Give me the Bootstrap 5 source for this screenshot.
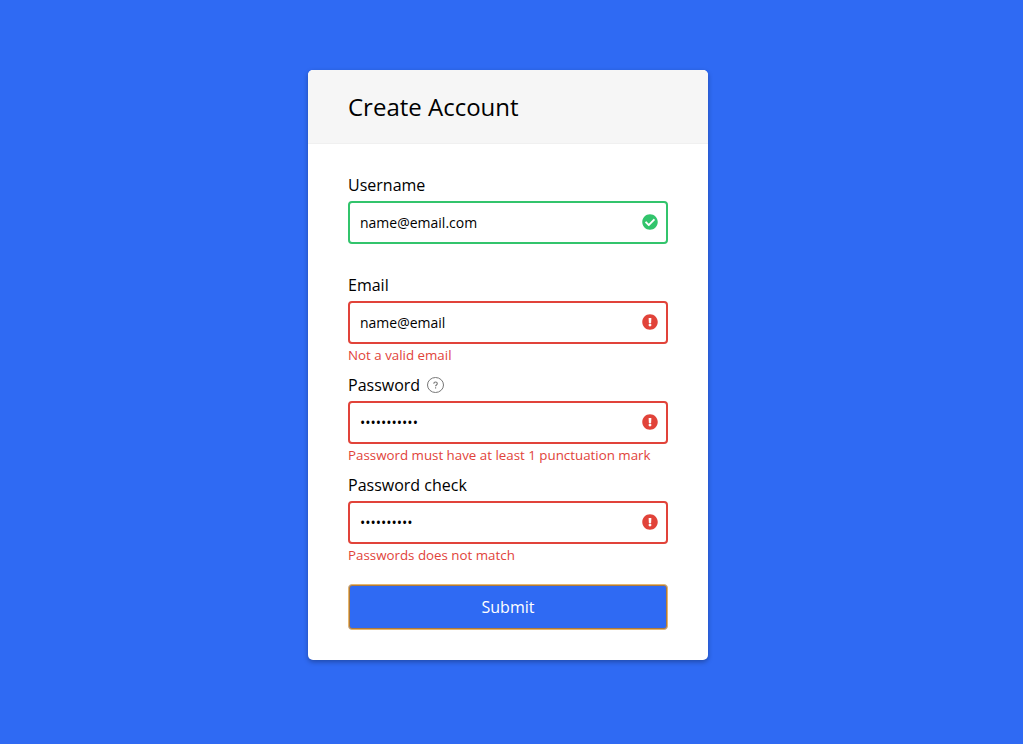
<!DOCTYPE html>
<html lang="en">
<head>
<meta charset="utf-8">
<meta name="viewport" content="width=device-width, initial-scale=1">
<title>Create Account</title>
<link rel="stylesheet" href="https://cdn.jsdelivr.net/npm/bootstrap@5.3.0/dist/css/bootstrap.min.css">
<style>
  body { background: #2f6af3; color: #000; font-family: "Open Sans", sans-serif; padding: 0 7px 14px 0; }
  .account { width: 400px; max-width: 100%; border-radius: 5px; overflow: hidden; box-shadow: 0 2px 5px rgba(0, 0, 0, .3); }
  .account-header { background: #f6f6f6; border-bottom: 1px solid #f0f0f0; padding: 20px 40px; }
  .account-header h1 { font-size: 24px; line-height: 33px; font-weight: 400; }
  .account-form { padding: 30px 40px; }
  .field { min-height: 100px; }
  .field-label { font-size: 16px; line-height: 22px; margin-bottom: 5px; }
  .field .form-control { height: 43px; border: 2px solid #f0f0f0; border-radius: 4px; padding: 10px 36px 10px 10px; font-size: 14px; line-height: 19px; color: #000; background-image: none; }
  .field .form-control.is-valid { border-color: #32c46c; }
  .field .form-control.is-invalid { border-color: #e1433a; }
  .status-icon { right: 10px; top: 13px; width: 16px; height: 16px; }
  .field-error { color: #e1433a; font-size: smaller; line-height: 18px; margin-top: 2px; }
  .help { width: 18px; height: 18px; margin-left: 7px; color: #777; }
  .btn-submit { height: 46px; padding: 0; color: #fff; background: #2f6af3; border: 1px solid #e6b66c; box-shadow: inset 0 0 0 1px #b07a3a; border-radius: 4px; font-size: 16px; line-height: 22px; margin-top: 10px; }
  .btn-submit:hover { color: #fff; background: #255de0; border-color: #e6b66c; }
</style>
</head>
<body class="d-flex align-items-center justify-content-center min-vh-100">
<svg class="d-none" aria-hidden="true">
  <symbol id="check" viewBox="0 0 512 512"><path fill="#32c46c" d="M504 256c0 137-111 248-248 248S8 393 8 256 119 8 256 8s248 111 248 248zM227.300 387.300l184-184c6.200-6.200 6.200-16.400 0-22.600l-22.600-22.600c-6.200-6.200-16.400-6.200-22.600 0L216 308.100l-70.100-70.100c-6.200-6.200-16.400-6.200-22.600 0l-22.600 22.600c-6.200 6.200-6.200 16.400 0 22.600l104 104c6.200 6.300 16.400 6.300 22.600.1z"/></symbol>
  <symbol id="alert" viewBox="0 0 512 512"><path fill="#e1433a" d="M504 256c0 137-111 248-248 248S8 393 8 256 119 8 256 8s248 111 248 248zm-248 50c-25.400 0-46 20.600-46 46s20.600 46 46 46 46-20.600 46-46-20.600-46-46-46zm-43.700-165.300l7.400 136c.4 6.400 5.600 11.300 12 11.300h48.500c6.400 0 11.600-5 12-11.300l7.400-136c.4-6.900-5.100-12.700-12-12.700h-63.400c-6.900 0-12.300 5.800-11.900 12.700z"/></symbol>
</svg>
<main class="account bg-white">
  <header class="account-header"><h1 class="m-0">Create Account</h1></header>
  <form class="account-form" novalidate>
    <div class="field">
      <label class="field-label d-block" for="username">Username</label>
      <div class="position-relative">
        <input class="form-control is-valid" type="text" id="username" value="name@email.com">
        <svg class="status-icon position-absolute" aria-hidden="true"><use href="#check"/></svg>
      </div>
    </div>
    <div class="field">
      <label class="field-label d-block" for="email">Email</label>
      <div class="position-relative">
        <input class="form-control is-invalid" type="email" id="email" value="name@email" aria-describedby="email-error">
        <svg class="status-icon position-absolute" aria-hidden="true"><use href="#alert"/></svg>
      </div>
      <div class="field-error" id="email-error">Not a valid email</div>
    </div>
    <div class="field">
      <label class="field-label d-flex align-items-center" for="password">Password
        <svg class="help" viewBox="0 0 18 18" fill="none" stroke="currentColor" aria-hidden="true"><ellipse cx="8.500" cy="9" rx="8" ry="7.500"/><path stroke-width="1.100" d="M6.800 7.700c0-2.200 3.500-2.200 3.500 0 0 1.200-1.700 1.300-1.700 2.500M8.600 11.200v1.200"/></svg>
      </label>
      <div class="position-relative">
        <input class="form-control is-invalid" type="password" id="password" value="password123" aria-describedby="password-error">
        <svg class="status-icon position-absolute" aria-hidden="true"><use href="#alert"/></svg>
      </div>
      <div class="field-error" id="password-error">Password must have at least 1 punctuation mark</div>
    </div>
    <div class="field">
      <label class="field-label d-block" for="password-check">Password check</label>
      <div class="position-relative">
        <input class="form-control is-invalid" type="password" id="password-check" value="password12" aria-describedby="check-error">
        <svg class="status-icon position-absolute" aria-hidden="true"><use href="#alert"/></svg>
      </div>
      <div class="field-error" id="check-error">Passwords does not match</div>
    </div>
    <button class="btn btn-submit w-100" type="submit">Submit</button>
  </form>
</main>
<script src="https://cdn.jsdelivr.net/npm/bootstrap@5.3.0/dist/js/bootstrap.bundle.min.js"></script>
</body>
</html>
